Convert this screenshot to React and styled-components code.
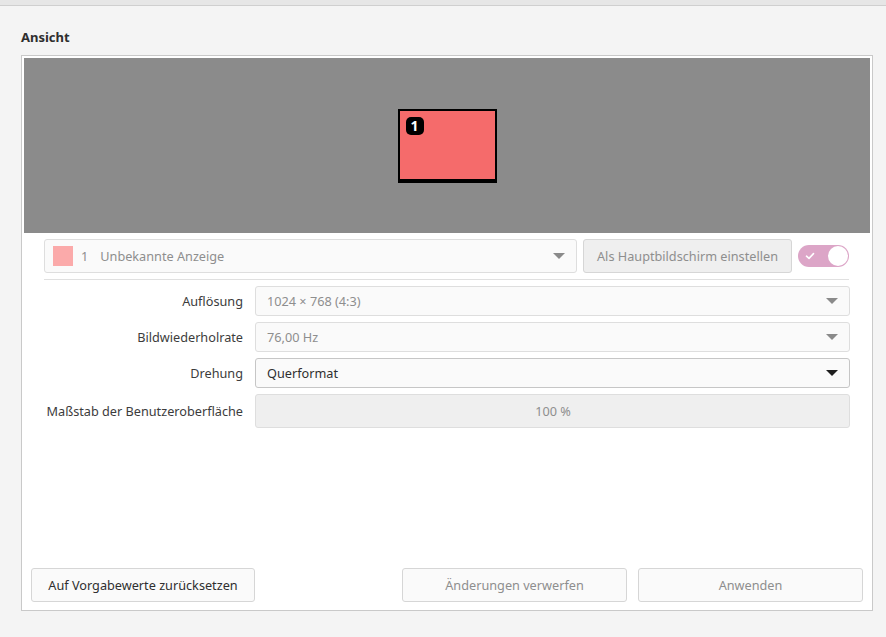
import React from "react";
import styled, { createGlobalStyle } from "styled-components";

const Global = createGlobalStyle`
  html, body { margin: 0; padding: 0; }
  body {
    background: #f4f4f4;
    font-family: "Noto Sans", "DejaVu Sans", sans-serif;
    font-size: 12.7px;
    color: #3c3c3c;
  }
`;

const Page = styled.div`
  width: 886px;
  height: 637px;
  overflow: hidden;
  background: #f4f4f4;
`;

const TopStrip = styled.div`
  height: 5px;
  background: #e6e6e6;
  border-bottom: 1px solid #cfcfcf;
`;

const Section = styled.div`
  padding: 0 13px 0 21px;
`;

const Title = styled.div`
  font-weight: 700;
  font-size: 13px;
  color: #2e2e2e;
  height: 18px;
  line-height: 18px;
  margin-top: 22px;
  margin-bottom: 9px;
`;

const Frame = styled.div`
  box-sizing: border-box;
  width: 852px;
  height: 556px;
  border: 1px solid #c9c9c9;
  background: #ffffff;
  padding: 2px;
  display: flex;
  flex-direction: column;
`;

const Preview = styled.div`
  height: 175px;
  background: #8b8b8b;
  display: flex;
  align-items: center;
  justify-content: center;
`;

const Monitor = styled.div`
  box-sizing: border-box;
  width: 99px;
  height: 74px;
  background: #f56b6b;
  border: 2px solid #000;
  border-bottom-width: 4px;
  position: relative;
`;

const MonitorBadge = styled.div`
  position: absolute;
  left: 6px;
  top: 6px;
  width: 18px;
  height: 18px;
  border-radius: 5px;
  background: #000;
  color: #fff;
  font-weight: 700;
  font-size: 14px;
  line-height: 18px;
  text-align: center;
`;

const Controls = styled.div`
  padding: 6px 21px 0 20px;
  display: flex;
  flex-direction: column;
`;

const TopRow = styled.div`
  display: flex;
  align-items: center;
  gap: 6px;
  height: 34px;
`;

const Field = styled.div`
  box-sizing: border-box;
  flex: 1;
  height: ${(p) => p.$h || 30}px;
  border: 1px solid ${(p) => (p.$active ? "#c6c6c6" : "#dedede")};
  border-radius: 3px;
  background: ${(p) => (p.$flat ? "#efefef" : "#fafafa")};
  display: flex;
  align-items: center;
  justify-content: ${(p) => (p.$center ? "center" : "flex-start")};
  padding: 0 10px 0 ${(p) => p.$pl ?? 11}px;
  color: ${(p) => (p.$active ? "#2f2f2f" : "#8e8e8e")};
  font-size: 12.7px;
  white-space: nowrap;
`;

const FieldText = styled.span`
  flex: ${(p) => (p.$grow ? 1 : "none")};
`;

const Swatch = styled.span`
  width: 20px;
  height: 20px;
  background: #fbaaaa;
  margin-right: 8px;
`;

const DisplayIndex = styled.span`
  margin-right: 12px;
`;

const Arrow = styled.span`
  width: 0;
  height: 0;
  border-left: 6px solid transparent;
  border-right: 6px solid transparent;
  border-top: 6px solid ${(p) => (p.$dark ? "#1e1e1e" : "#8a8a8a")};
  margin-right: 1px;
`;

const PlainButton = styled.button`
  box-sizing: border-box;
  height: 34px;
  width: ${(p) => p.$w}px;
  border: 1px solid #d6d6d6;
  border-radius: 3px;
  background: ${(p) => (p.$grey ? "#efefef" : "#fafafa")};
  color: ${(p) => (p.$disabled ? "#8e8e8e" : "#2f2f2f")};
  font-family: inherit;
  font-size: 12.7px;
  padding: 0;
  white-space: nowrap;
  cursor: default;
`;

const Switch = styled.div`
  box-sizing: border-box;
  width: 51px;
  height: 22px;
  border-radius: 11px;
  background: #dca5c7;
  position: relative;
  display: flex;
  align-items: center;
  padding-left: 7px;
`;

const Knob = styled.div`
  position: absolute;
  right: 1px;
  top: 1px;
  width: 20px;
  height: 20px;
  border-radius: 50%;
  background: #fff;
`;

const Separator = styled.div`
  height: 1px;
  background: #e0e0e0;
  margin: 6px 0 6px 0;
`;

const Form = styled.div`
  display: grid;
  grid-template-columns: 199px 595px;
  column-gap: 12px;
  row-gap: 6px;
  align-items: center;
`;

const Label = styled.div`
  text-align: right;
  color: #3c3c3c;
  font-size: 12.7px;
  white-space: nowrap;
`;

const Spacer = styled.div`
  flex: 1;
`;

const Bottom = styled.div`
  display: flex;
  align-items: center;
  padding: 0 7px 6px 7px;
`;

const BtnGroup = styled.div`
  margin-left: auto;
  display: flex;
  gap: 11px;
`;

export default function App() {
  return (
    <Page>
      <Global />
      <TopStrip />
      <Section>
        <Title>Ansicht</Title>
        <Frame>
          <Preview>
            <Monitor>
              <MonitorBadge>1</MonitorBadge>
            </Monitor>
          </Preview>
          <Controls>
            <TopRow>
              <Field $h={34} $pl={8}>
                <Swatch />
                <DisplayIndex>1</DisplayIndex>
                <FieldText $grow>Unbekannte Anzeige</FieldText>
                <Arrow />
              </Field>
              <PlainButton $w={209} $grey $disabled>
                Als Hauptbildschirm einstellen
              </PlainButton>
              <Switch>
                <svg width="10" height="8" viewBox="0 0 10 8">
                  <path d="M1.5 4.2 L4 6.4 L8.5 1.6" fill="none" stroke="#fff" strokeWidth="1.6" strokeLinecap="round" strokeLinejoin="round" />
                </svg>
                <Knob />
              </Switch>
            </TopRow>
            <Separator />
            <Form>
              <Label>Auflösung</Label>
              <Field>
                <FieldText $grow>1024 × 768 (4:3)</FieldText>
                <Arrow />
              </Field>
              <Label>Bildwiederholrate</Label>
              <Field>
                <FieldText $grow>76,00 Hz</FieldText>
                <Arrow />
              </Field>
              <Label>Drehung</Label>
              <Field $active>
                <FieldText $grow>Querformat</FieldText>
                <Arrow $dark />
              </Field>
              <Label>Maßstab der Benutzeroberfläche</Label>
              <Field $h={34} $flat $center>
                <FieldText>100 %</FieldText>
              </Field>
            </Form>
          </Controls>
          <Spacer />
          <Bottom>
            <PlainButton $w={224}>Auf Vorgabewerte zurücksetzen</PlainButton>
            <BtnGroup>
              <PlainButton $w={225} $disabled>Änderungen verwerfen</PlainButton>
              <PlainButton $w={225} $disabled>Anwenden</PlainButton>
            </BtnGroup>
          </Bottom>
        </Frame>
      </Section>
    </Page>
  );
}
